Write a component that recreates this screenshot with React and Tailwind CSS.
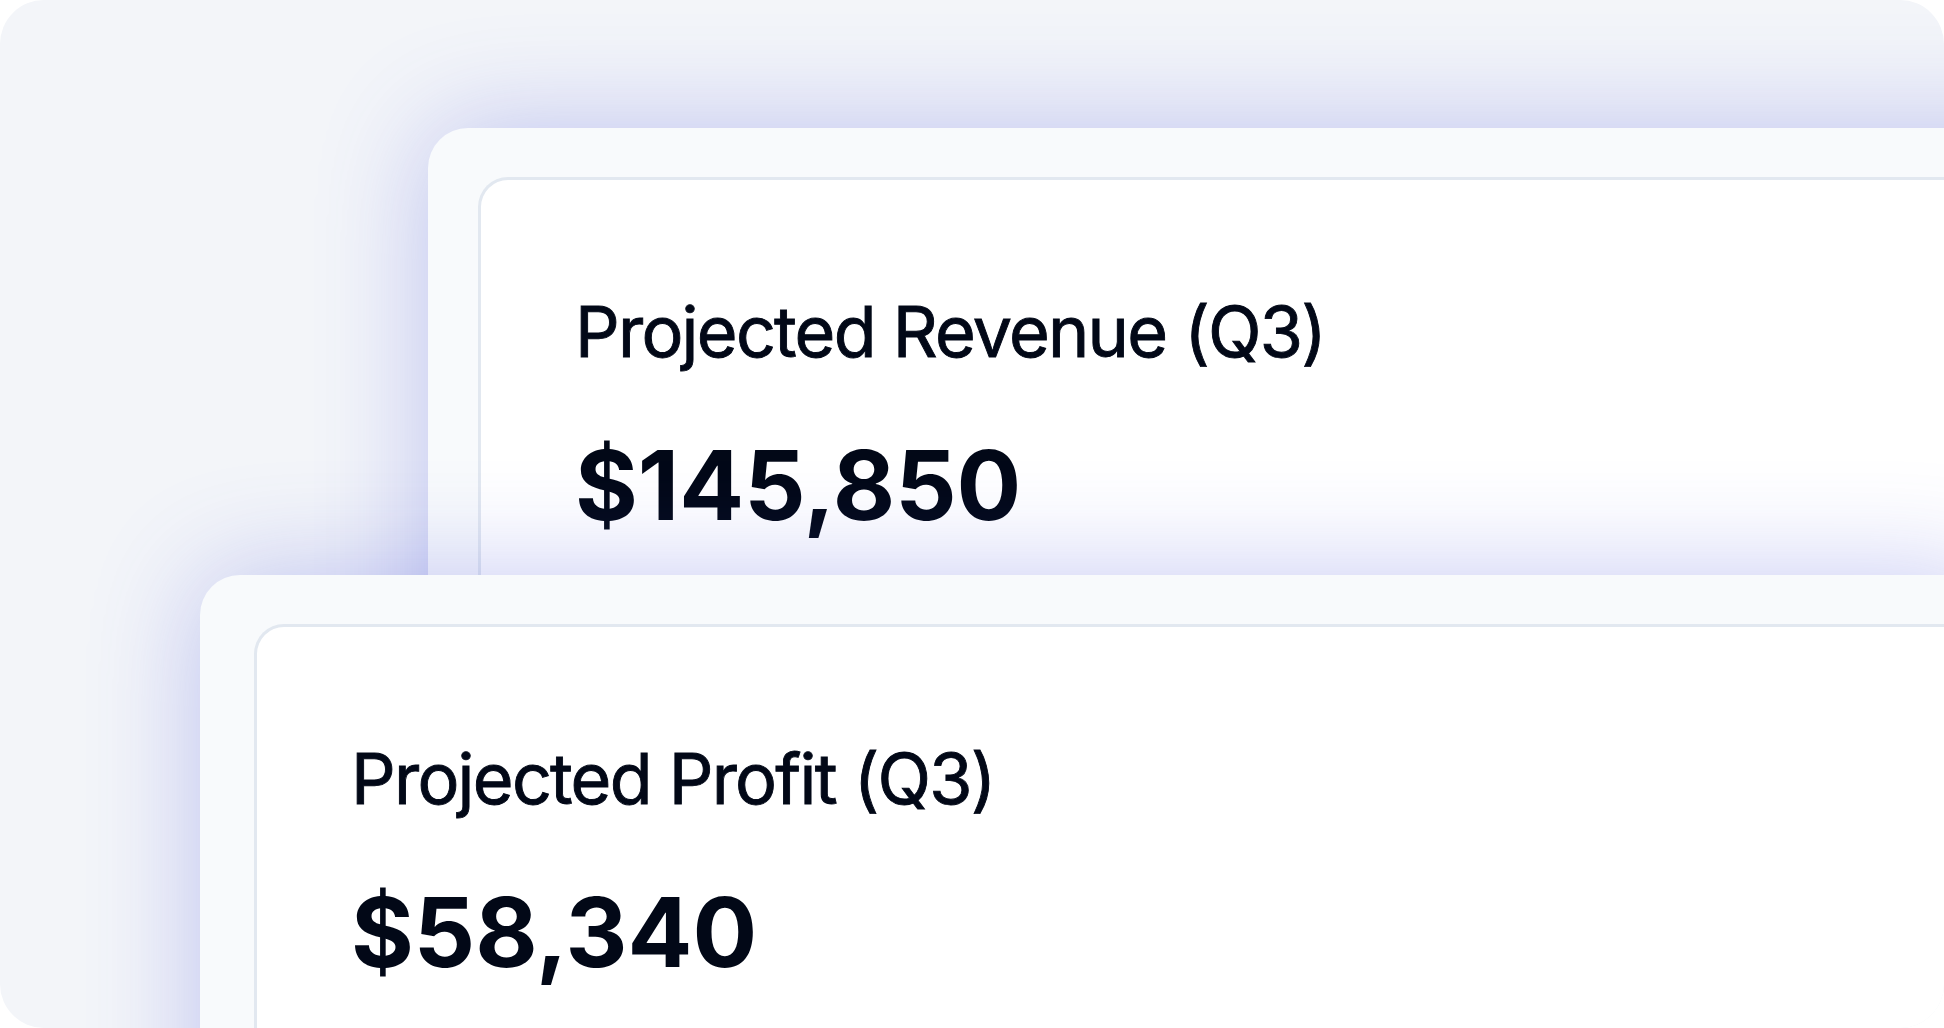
const MetricCard = ({ label, value, className = "" }) => (
  <div
    className={`relative h-[700px] w-[1800px] rounded-[40px] bg-[#f8fafc] pt-[49px] shadow-[0_0_110px_rgba(79,86,220,0.32)] ${className}`}
  >
    <div className="h-full rounded-tl-[30px] border-l-[3px] border-t-[3px] border-[#e2e8f0] bg-white pl-[94px] pt-[117px]">
      <p className="text-[70px] font-normal leading-none tracking-[-0.025em] text-[#020817] [-webkit-text-stroke:0.9px_#020817]">
        {label}
      </p>
      <p className="mt-[70px] text-[96px] font-bold leading-none text-[#020817]">{value}</p>
    </div>
  </div>
)

export default function App() {
  return (
    <div className="h-[1028px] w-[1944px] overflow-hidden rounded-[44px] bg-[#f3f5f9] pt-[128px] font-['Inter',sans-serif]">
      <MetricCard className="ml-[428px] pl-[50px]" label="Projected Revenue (Q3)" value="$145,850" />
      <MetricCard className="-mt-[253px] ml-[200px] pl-[54px]" label="Projected Profit (Q3)" value="$58,340" />
    </div>
  )
}
